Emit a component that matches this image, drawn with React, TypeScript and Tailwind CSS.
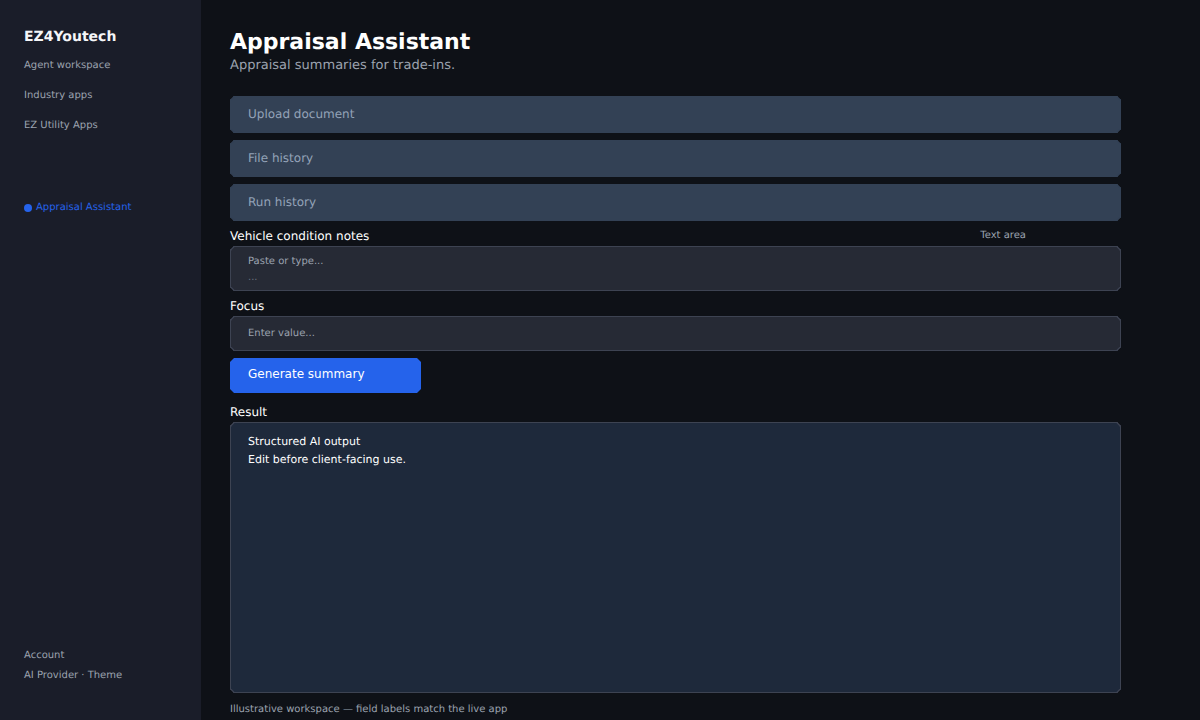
// App.tsx
// appraisal assistant workspace mock

const navLinks = ['Agent workspace', 'Industry apps', 'EZ Utility Apps']
const panels = ['Upload document', 'File history', 'Run history']

const Sidebar = () => (
  <aside className="flex h-[720px] w-[201px] shrink-0 flex-col bg-[#1a1d29] pl-6">
    <h2 className="mt-[28px] text-[14px] leading-[18px] font-bold text-[#f5f6f8]">EZ4Youtech</h2>
    <nav className="mt-[14px] flex flex-col gap-[18px]">
      {navLinks.map((link) => (
        <a key={link} className="text-[10px] leading-[12px] text-[#9ca3af]">
          {link}
        </a>
      ))}
    </nav>
    <div className="mt-[70px] flex items-center gap-[4px] text-[10px] leading-[12px] text-[#2563eb]">
      <span className="mb-[1px] h-2 w-2 rounded-full bg-[#2563eb]" />
      Appraisal Assistant
    </div>
    <div className="mt-auto mb-[38px] flex flex-col gap-[8px] text-[10px] leading-[12px] text-[#9ca3af]">
      <span>Account</span>
      <span>AI Provider · Theme</span>
    </div>
  </aside>
)

const PanelButton = ({ label }: { label: string }) => (
  <div className="flex h-[37px] items-center rounded-[4px] border border-[#334155] bg-[#334155] pb-[1px] pl-[17px] text-xs text-[#94a3b8] [corner-shape:bevel]">
    {label}
  </div>
)

export default function App()
{
  return (
    <div className="flex h-[720px] w-[1200px] overflow-hidden bg-[#0e1117] font-['DejaVu_Sans',sans-serif] [text-rendering:geometricPrecision]">
      <Sidebar />
      <main className="w-[891px] pl-[29px] box-content">
        <h1 className="mt-[29px] text-[22px] leading-[27px] font-bold text-white">Appraisal Assistant</h1>
        <p className="mt-[2px] text-[13px] leading-[16px] text-[#9ca3af]">Appraisal summaries for trade-ins.</p>

        <div className="mt-[22px] flex flex-col gap-[7px]">
          {panels.map((panel) => (
            <PanelButton key={panel} label={panel} />
          ))}
        </div>

        <div className="mt-[7px] flex h-[18px] items-center justify-between pr-[95px]">
          <label className="mb-[2px] text-xs text-white">Vehicle condition notes</label>
          <span className="mb-[3px] text-[10px] text-[#9ca3af]">Text area</span>
        </div>
        <div className="h-[45px] rounded-[4px] border border-[#3d4352] bg-[#262a35] pt-[7px] pl-[17px] text-[10px] leading-[16px] text-[#9ca3af] [corner-shape:bevel]">
          <p>Paste or type...</p>
          <p className="text-[#6b7280]">...</p>
        </div>

        <label className="mt-[6px] block h-[19px] text-xs leading-[18px] text-white">Focus</label>
        <div className="flex h-[35px] items-center rounded-[4px] border border-[#3d4352] bg-[#262a35] pl-[17px] text-[10px] text-[#9ca3af] [corner-shape:bevel]">
          Enter value...
        </div>

        <button className="mt-[7px] flex h-[35px] w-[191px] items-center rounded-[4px] bg-[#2563eb] pb-[3px] pl-[18px] text-xs text-white [corner-shape:bevel]">
          Generate summary
        </button>

        <label className="mt-[11px] block h-[18px] text-xs leading-[16px] text-white">Result</label>
        <div className="h-[271px] rounded-[4px] border border-[#3d4352] bg-[#1e293b] pt-[10px] pl-[17px] text-[11px] leading-[18px] text-white [corner-shape:bevel]">
          <p>Structured AI output</p>
          <p>Edit before client-facing use.</p>
        </div>

        <p className="mt-[10px] text-[10px] leading-[13px] text-[#9ca3af]">Illustrative workspace — field labels match the live app</p>
      </main>
    </div>
  )
}
